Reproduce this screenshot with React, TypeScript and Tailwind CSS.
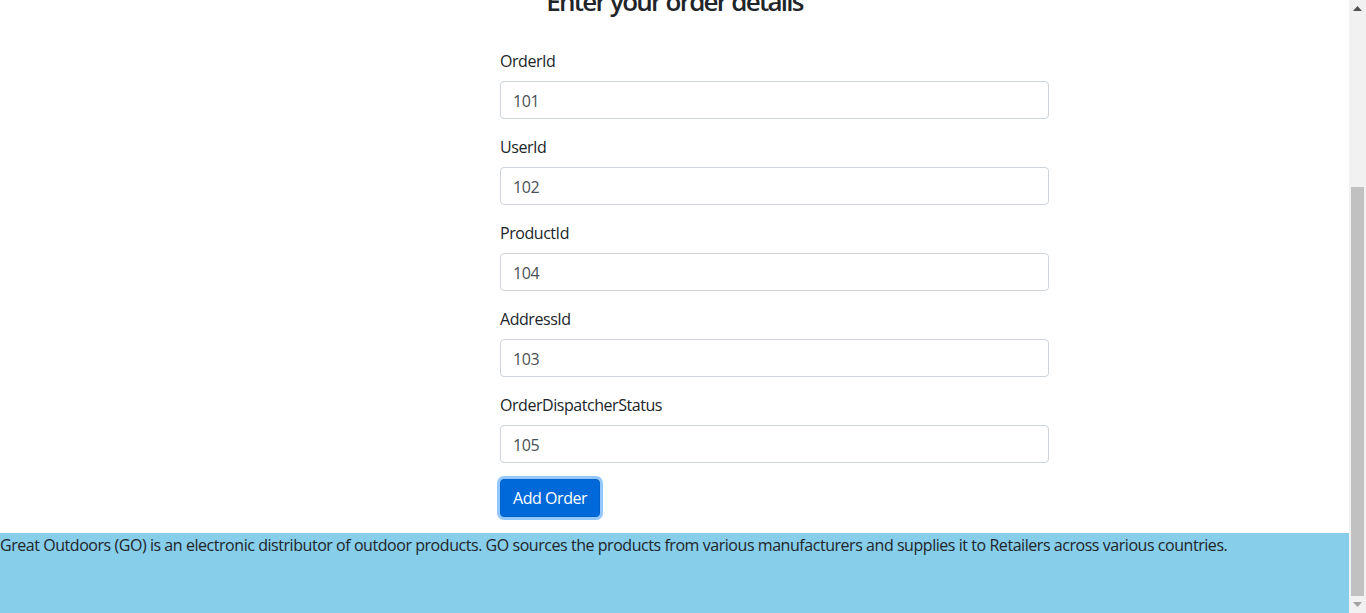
import React from "react";

const fields = [
  { label: "OrderId", value: "101" },
  { label: "UserId", value: "102" },
  { label: "ProductId", value: "104" },
  { label: "AddressId", value: "103" },
  { label: "OrderDispatcherStatus", value: "105" },
];

export default function App() {
  return (
    <div
      className="flex h-[613px] w-[1366px] overflow-hidden bg-white tracking-[-0.45px] text-[#212529]"
      style={{ fontFamily: '"Open Sans", "Noto Sans", sans-serif' }}
    >
      <div className="flex flex-1 flex-col">
        <main className="flex-1">
          <h3 className="-mt-[16px] mb-[31px] text-center text-[26px] font-semibold leading-[34px] tracking-[-1.75px]">
            Enter your order details
          </h3>
          <form className="ml-[500px] w-[549px]" onSubmit={(e) => e.preventDefault()}>
            {fields.map((f) => (
              <div key={f.label} className="mb-4">
                <label className="mb-2 block text-[16px] leading-[24px]">{f.label}</label>
                <input
                  defaultValue={f.value}
                  className="block h-[38px] w-full rounded-[4px] border border-[#ced4da] bg-white px-3 pt-[2px] text-[16px] tracking-[-0.45px] text-[#495057] outline-none"
                />
              </div>
            ))}
            <button
              type="submit"
              className="h-[38px] rounded-[4px] border border-[#0062cc] bg-[#0069d9] px-3 text-[16px] leading-[24px] tracking-[-0.45px] text-white shadow-[0_0_0_3px_rgba(38,143,255,0.5)]"
            >
              Add Order
            </button>
          </form>
        </main>
        <footer className="h-[80px] bg-[#87ceeb] text-[16px] leading-[24px]">
          Great Outdoors (GO) is an electronic distributor of outdoor products. GO sources the products from various manufacturers and supplies it to Retailers across various countries.
        </footer>
      </div>
      <div className="flex w-[17px] flex-col bg-[#f1f1f1]">
        <div className="flex h-[17px] items-center justify-center">
          <svg width="9" height="5" viewBox="0 0 9 5"><path d="M4.5 0L9 5H0z" fill="#505050" /></svg>
        </div>
        <div className="flex flex-1 flex-col px-[2px]">
          <div className="h-[170px]" />
          <div className="flex-1 bg-[#c1c1c1]" />
        </div>
        <div className="flex h-[17px] items-center justify-center">
          <svg width="9" height="5" viewBox="0 0 9 5"><path d="M0 0H9L4.5 5z" fill="#a3a3a3" /></svg>
        </div>
      </div>
    </div>
  );
}
